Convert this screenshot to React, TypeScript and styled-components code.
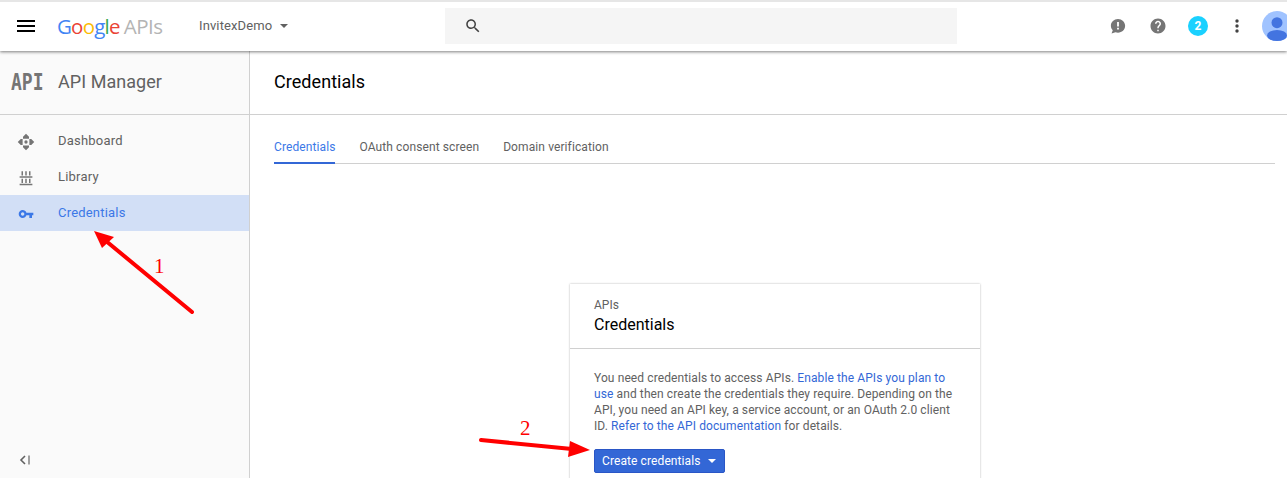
import React from "react";
import styled, { createGlobalStyle } from "styled-components";

const Global = createGlobalStyle`
  html, body { margin: 0; padding: 0; background: #fff; overflow: hidden; }
  #root { height: 478px; }
  * { box-sizing: border-box; }
`;

const Page = styled.div`
  position: relative;
  width: 1287px;
  height: 478px;
  overflow: hidden;
  display: flex;
  flex-direction: column;
  font-family: Roboto, "Liberation Sans", sans-serif;
  color: #616161;
`;

const TopBar = styled.header`
  position: relative;
  z-index: 2;
  flex: 0 0 51px;
  height: 51px;
  display: flex;
  align-items: center;
  padding-bottom: 2px;
  background: #fff;
  border-top: 2px solid #e6e6e6;
  box-shadow: 0 1px 3px rgba(0, 0, 0, 0.5);
`;

const Menu = styled.svg`
  width: 18px;
  height: 12px;
  margin-left: 17px;
  flex: none;
`;

const Logo = styled.div`
  margin-left: 22px;
  width: 142px;
  flex: none;
  display: flex;
  align-items: baseline;
  font-family: "Open Sans", Roboto, sans-serif;
  font-size: 20.5px;
  font-weight: 500;
  line-height: 24px;
  letter-spacing: -0.8px;
`;

const Letter = styled.span<{ $c: string }>`
  color: ${(p) => p.$c};
`;

const LogoSuffix = styled.span`
  margin-left: 4px;
  color: #b4b4b4;
  font-weight: 400;
  letter-spacing: -0.45px;
`;

const Project = styled.div`
  width: 246px;
  flex: none;
  display: flex;
  align-items: center;
  gap: 8px;
  font-size: 13px;
  letter-spacing: 0.12px;
  color: #616161;
`;

const Caret = styled.span<{ $c?: string }>`
  width: 0;
  height: 0;
  border-left: 4px solid transparent;
  border-right: 4px solid transparent;
  border-top: 4px solid ${(p) => p.$c ?? "#616161"};
`;

const Search = styled.div`
  width: 512px;
  height: 36px;
  flex: none;
  display: flex;
  align-items: center;
  padding-left: 19px;
  background: #f5f5f5;
`;

const Actions = styled.div`
  position: absolute;
  right: 0;
  top: -2px;
  height: 52px;
  display: flex;
  align-items: center;
`;

const ActionSlot = styled.div`
  width: 40px;
  display: flex;
  justify-content: center;
  align-items: center;
`;

const Badge = styled.div`
  width: 20px;
  height: 20px;
  border-radius: 50%;
  background: #1ad1ff;
  color: #fff;
  font-size: 12px;
  font-weight: 700;
  display: flex;
  align-items: center;
  justify-content: center;
`;

const Dots = styled.svg`
  width: 4px;
  height: 14px;
  margin-right: 2px;
  flex: none;
`;

const Avatar = styled.svg`
  width: 30px;
  height: 30px;
  margin-left: 4px;
  margin-right: -5px;
  flex: none;
`;

const Body = styled.div`
  flex: 1;
  display: flex;
  min-height: 0;
`;

const Sidebar = styled.aside`
  width: 250px;
  flex: none;
  display: flex;
  flex-direction: column;
  background: #fafafa;
  border-right: 1px solid #d0d0d0;
`;

const SideHead = styled.div`
  height: 64px;
  flex: none;
  display: flex;
  align-items: center;
  padding-bottom: 2px;
  border-bottom: 1px solid #d0d0d0;
`;

const ApiMark = styled.span`
  width: 58px;
  padding-left: 11px;
  flex: none;
  font-family: "DejaVu Sans Mono", monospace;
  font-weight: 700;
  font-size: 18px;
  color: #757575;
  display: inline-block;
  transform: scaleY(1.3);
  transform-origin: center;
`;

const SideTitle = styled.span`
  font-size: 18px;
  letter-spacing: 0.05px;
  color: #616161;
`;

const Nav = styled.nav`
  padding-top: 8px;
  flex: 1;
`;

const NavItem = styled.div<{ $active?: boolean }>`
  height: 36px;
  display: flex;
  align-items: center;
  padding-bottom: 2px;
  font-size: 13px;
  letter-spacing: 0.2px;
  color: ${(p) => (p.$active ? "#3b78e7" : "#616161")};
  background: ${(p) => (p.$active ? "#d2dff6" : "transparent")};
`;

const NavIcon = styled.span`
  width: 58px;
  flex: none;
  display: flex;
  align-items: center;
  justify-content: center;
  padding-right: 6px;
  margin-top: 3px;
`;

const Collapse = styled.div`
  height: 28px;
  flex: none;
  padding-left: 19px;
`;

const Main = styled.main`
  flex: 1;
  min-width: 0;
  display: flex;
  flex-direction: column;
`;

const MainHead = styled.div`
  height: 64px;
  flex: none;
  display: flex;
  align-items: center;
  padding: 0 0 2px 24px;
  border-bottom: 1px solid #d0d0d0;
  font-size: 18px;
  letter-spacing: 0.05px;
  color: #000;
`;

const Content = styled.div`
  padding: 13px 12px 0 24px;
  flex: 1;
`;

const Tabs = styled.div`
  display: flex;
  gap: 24px;
  border-bottom: 1px solid #d0d0d0;
  height: 36px;
`;

const Tab = styled.div<{ $active?: boolean }>`
  height: 36px;
  padding-top: 1px;
  line-height: 36px;
  font-size: 12px;
  letter-spacing: 0.1px;
  color: ${(p) => (p.$active ? "#3b78e7" : "#616161")};
  border-bottom: ${(p) => (p.$active ? "2px solid #3367d6" : "none")};
`;

const Card = styled.section`
  width: 410px;
  margin: 120px 0 0 296px;
  height: 300px;
  background: #fff;
  box-shadow: 0 0 2px rgba(0, 0, 0, 0.3);
`;

const CardHead = styled.div`
  height: 65px;
  padding: 14px 24px 0;
  border-bottom: 1px solid #d0d0d0;
`;

const CardOver = styled.div`
  font-size: 12px;
  line-height: 14px;
  color: #616161;
`;

const CardTitle = styled.div`
  font-size: 16px;
  line-height: 20px;
  margin-top: 3px;
  color: #000;
`;

const CardBody = styled.div`
  padding: 21px 24px 0;
`;

const Para = styled.p`
  margin: 0;
  font-size: 12px;
  line-height: 16px;
  letter-spacing: 0.1px;
  color: #616161;
`;

const Link = styled.span`
  color: #3367d6;
`;

const Primary = styled.div`
  margin-top: 15px;
  width: 131px;
  height: 24px;
  display: flex;
  align-items: center;
  gap: 7px;
  padding-left: 7px;
  background: #3367d6;
  border: 1px solid #2a56c6;
  border-radius: 2px;
  color: #fff;
  font-size: 12px;
  letter-spacing: 0.1px;
`;

const Overlay = styled.svg`
  position: absolute;
  inset: 0;
  z-index: 5;
  pointer-events: none;
`;

const Mark = styled.span<{ $x: number; $y: number }>`
  position: absolute;
  z-index: 6;
  left: ${(p) => p.$x}px;
  top: ${(p) => p.$y}px;
  font-family: "Liberation Serif", serif;
  font-size: 21px;
  line-height: 24px;
  color: #f00;
`;

const Ic: React.FC<{ d: string; s?: number; c?: string }> = ({ d, s = 18, c = "#757575" }) => (
  <svg width={s} height={s} viewBox="0 0 24 24" fill={c} style={{ flex: "none" }}>
    <path d={d} />
  </svg>
);

const SEARCH = "M15.5 14h-.79l-.28-.27C15.41 12.59 16 11.11 16 9.5 16 5.91 13.09 3 9.5 3S3 5.91 3 9.5 5.91 16 9.5 16c1.61 0 3.09-.59 4.23-1.57l.27.28v.79l5 4.99L20.49 19l-4.99-5zm-6 0C7.01 14 5 11.99 5 9.5S7.01 5 9.5 5 14 7.01 14 9.5 11.99 14 9.5 14z";
const HELP = "M12 2C6.48 2 2 6.48 2 12s4.48 10 10 10 10-4.48 10-10S17.52 2 12 2zm1 17h-2v-2h2v2zm2.07-7.75l-.9.92C13.45 12.9 13 13.5 13 15h-2v-.5c0-1.1.45-2.1 1.17-2.83l1.24-1.26c.37-.36.59-.86.59-1.41 0-1.1-.9-2-2-2s-2 .9-2 2H8c0-2.21 1.79-4 4-4s4 1.79 4 4c0 .88-.36 1.68-.93 2.25z";
const KEY = "M12.65 10C11.83 7.67 9.61 6 7 6c-3.31 0-6 2.69-6 6s2.69 6 6 6c2.61 0 4.83-1.67 5.65-4H17v4h4v-4h2v-4H12.65zM7 14.5c-1.4 0-2.5-1.1-2.5-2.5S5.600 9.500 7 9.500s2.500 1.100 2.500 2.500-1.100 2.500-2.500 2.500z";
const FEEDBACK = "M12 2.500c-5.200 0-9.500 3.900-9.500 9 0 2.400.9 4.500 2.500 6.100L3.400 22l5.200-1.700c1.100.4 2.200.6 3.400.6 5.200 0 9.500-4 9.500-9.200S17.200 2.500 12 2.500zm1.200 14h-2.400v-2.300h2.400v2.300zm0-4h-2.400V6.500h2.400v6z";
const MOVE = "M12 1l4 4v2.500H8V5zm0 22l-4-4v-2.500h8V19zM1 12l4-4h2.500v8H5zm22 0l-4 4h-2.500V8H19zM12 9.800a2.200 2.200 0 1 1 0 4.400 2.200 2.200 0 0 1 0-4.400z";
const LIB = "M6 3h2v5.500H6zm5 0h2v5.500h-2zm5 0h2v5.500h-2zM3.500 9.500h17V11.500h-17zM6 13h2v5.500H6zm5 0h2v5.500h-2zm5 0h2v5.500h-2zM3.500 19.500h17V21.500h-17z";

const googleLetters: [string, string][] = [
  ["G", "#4285f4"],
  ["o", "#ea4335"],
  ["o", "#fbbc05"],
  ["g", "#4285f4"],
  ["l", "#34a853"],
  ["e", "#ea4335"],
];

export default function App() {
  return (
    <Page>
      <Global />
      <TopBar>
        <Menu viewBox="0 0 18 12">
          <path d="M0 0h18v2H0zM0 5h18v2H0zM0 10h18v2H0z" fill="#000" />
        </Menu>
        <Logo>
          {googleLetters.map(([l, c], i) => (
            <Letter key={i} $c={c}>{l}</Letter>
          ))}
          <LogoSuffix>APIs</LogoSuffix>
        </Logo>
        <Project>
          InvitexDemo
          <Caret />
        </Project>
        <Search>
          <Ic d={SEARCH} s={18} c="#424242" />
        </Search>
        <Actions>
          <ActionSlot><Ic d={FEEDBACK} /></ActionSlot>
          <ActionSlot><Ic d={HELP} /></ActionSlot>
          <ActionSlot><Badge>2</Badge></ActionSlot>
          <ActionSlot>
            <Dots viewBox="0 0 4 14" fill="#424242">
              <circle cx="2" cy="2" r="1.7" />
              <circle cx="2" cy="7" r="1.7" />
              <circle cx="2" cy="12" r="1.7" />
            </Dots>
          </ActionSlot>
          <Avatar viewBox="0 0 30 30">
            <circle cx="15" cy="15" r="15" fill="#a0c3ff" />
            <circle cx="15" cy="11.700" r="5.500" fill="#4374e0" />
            <ellipse cx="15" cy="24.500" rx="10" ry="5.500" fill="#4374e0" />
          </Avatar>
        </Actions>
      </TopBar>
      <Body>
        <Sidebar>
          <SideHead>
            <ApiMark>API</ApiMark>
            <SideTitle>API Manager</SideTitle>
          </SideHead>
          <Nav>
            <NavItem>
              <NavIcon><Ic d={MOVE} /></NavIcon>Dashboard
            </NavItem>
            <NavItem>
              <NavIcon><Ic d={LIB} /></NavIcon>Library
            </NavItem>
            <NavItem $active>
              <NavIcon><Ic d={KEY} s={16} c="#3b78e7" /></NavIcon>Credentials
            </NavItem>
          </Nav>
          <Collapse>
            <svg width="12" height="10" viewBox="0 0 12 10" fill="none">
              <path d="M6 1L2 5l4 4" stroke="#616161" strokeWidth="1.6" />
              <path d="M10 0.5v9" stroke="#8a8a8a" strokeWidth="1.6" />
            </svg>
          </Collapse>
        </Sidebar>
        <Main>
          <MainHead>Credentials</MainHead>
          <Content>
            <Tabs>
              <Tab $active>Credentials</Tab>
              <Tab>OAuth consent screen</Tab>
              <Tab>Domain verification</Tab>
            </Tabs>
            <Card>
              <CardHead>
                <CardOver>APIs</CardOver>
                <CardTitle>Credentials</CardTitle>
              </CardHead>
              <CardBody>
                <Para>
                  You need credentials to access APIs. <Link>Enable the APIs you plan to use</Link> and then create the credentials they require. Depending on the API, you need an API key, a service account, or an OAuth 2.0 client ID. <Link>Refer to the API documentation</Link> for details.
                </Para>
                <Primary>
                  Create credentials
                  <Caret $c="#fff" />
                </Primary>
              </CardBody>
            </Card>
          </Content>
        </Main>
      </Body>
      <Overlay width="1287" height="478" viewBox="0 0 1287 478">
        <path d="M192 312L106 241" stroke="#f00" strokeWidth="4" strokeLinecap="round" fill="none" />
        <path d="M94 231L114 237L102 248Z" fill="#f00" />
        <path d="M481 440L572 449" stroke="#f00" strokeWidth="4" strokeLinecap="round" fill="none" />
        <path d="M590 450L570 441L568 457Z" fill="#f00" />
      </Overlay>
      <Mark $x={154} $y={254}>1</Mark>
      <Mark $x={520} $y={416}>2</Mark>
    </Page>
  );
}
